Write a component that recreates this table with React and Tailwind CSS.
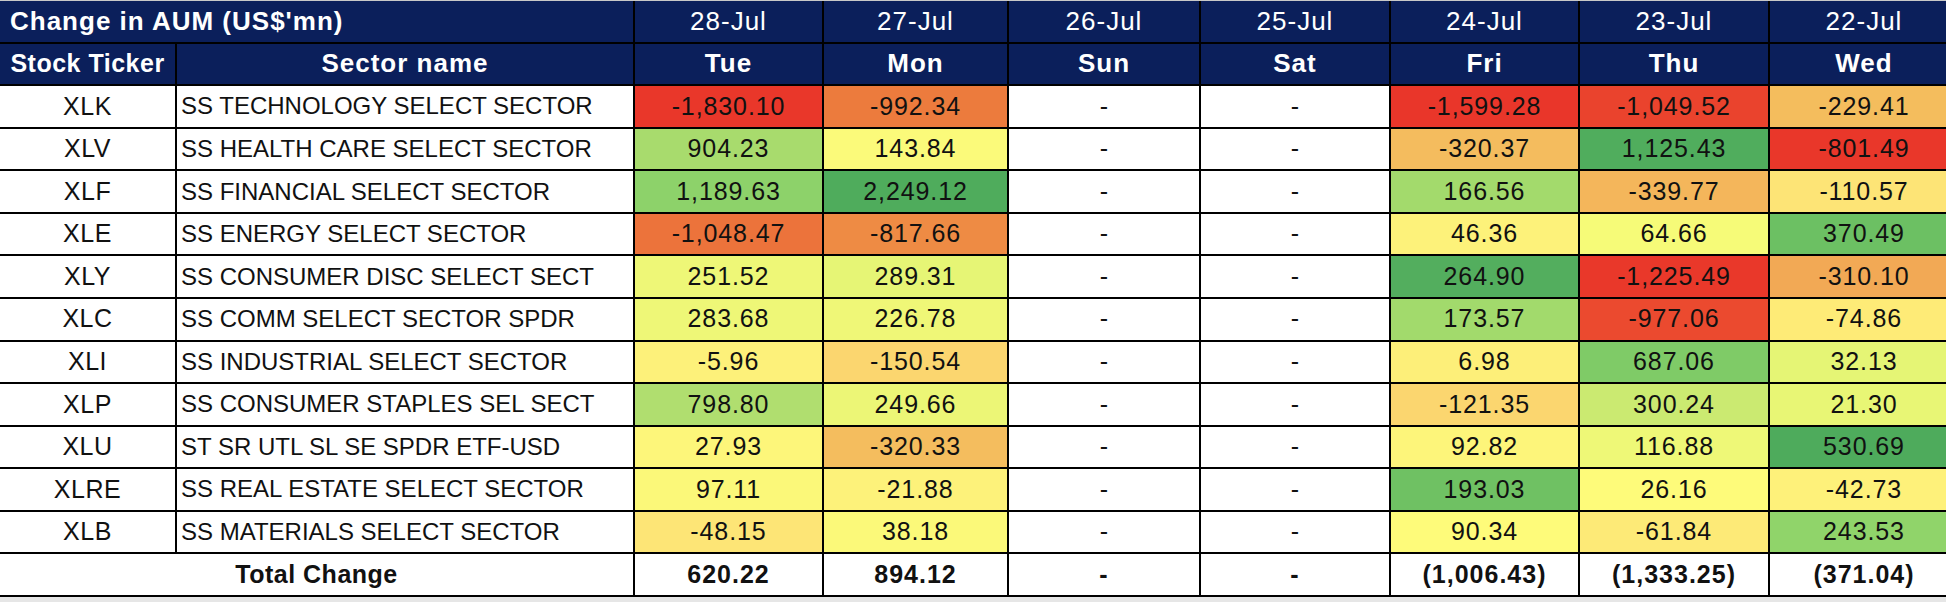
const days = [
  { date: "28-Jul", day: "Tue" },
  { date: "27-Jul", day: "Mon" },
  { date: "26-Jul", day: "Sun" },
  { date: "25-Jul", day: "Sat" },
  { date: "24-Jul", day: "Fri" },
  { date: "23-Jul", day: "Thu" },
  { date: "22-Jul", day: "Wed" },
];

// [value, background] per day; null = weekend dash
const rows = [
  ["XLK", "SS TECHNOLOGY SELECT SECTOR", [["-1,830.10", "#e9372a"], ["-992.34", "#ec7b3d"], null, null, ["-1,599.28", "#e9362a"], ["-1,049.52", "#ea432d"], ["-229.41", "#f4bd5d"]]],
  ["XLV", "SS HEALTH CARE SELECT SECTOR", [["904.23", "#a8db6d"], ["143.84", "#fbfa7a"], null, null, ["-320.37", "#f4bc5e"], ["1,125.43", "#50ad5d"], ["-801.49", "#e9372a"]]],
  ["XLF", "SS FINANCIAL SELECT SECTOR", [["1,189.63", "#8dd26a"], ["2,249.12", "#4fac5c"], null, null, ["166.56", "#a3da6c"], ["-339.77", "#f4b65b"], ["-110.57", "#fde476"]]],
  ["XLE", "SS ENERGY SELECT SECTOR", [["-1,048.47", "#ec733b"], ["-817.66", "#ee8b44"], null, null, ["46.36", "#fdf27a"], ["64.66", "#f6fb78"], ["370.49", "#6cc063"]]],
  ["XLY", "SS CONSUMER DISC SELECT SECT", [["251.52", "#eef777"], ["289.31", "#e6f575"], null, null, ["264.90", "#53ae5e"], ["-1,225.49", "#e9382a"], ["-310.10", "#f2a955"]]],
  ["XLC", "SS COMM SELECT SECTOR SPDR", [["283.68", "#eef777"], ["226.78", "#eff777"], null, null, ["173.57", "#a2da6c"], ["-977.06", "#eb4a2f"], ["-74.86", "#feeb77"]]],
  ["XLI", "SS INDUSTRIAL SELECT SECTOR", [["-5.96", "#fdf17a"], ["-150.54", "#fbd66f"], null, null, ["6.98", "#fdef79"], ["687.06", "#7fcb67"], ["32.13", "#e5f575"]]],
  ["XLP", "SS CONSUMER STAPLES SEL SECT", [["798.80", "#b0de6f"], ["249.66", "#ecf676"], null, null, ["-121.35", "#fbd66f"], ["300.24", "#cbea71"], ["21.30", "#e8f675"]]],
  ["XLU", "ST SR UTL SL SE SPDR ETF-USD", [["27.93", "#fdf67a"], ["-320.33", "#f4bd5e"], null, null, ["92.82", "#fdf57a"], ["116.88", "#eef877"], ["530.69", "#4eab5c"]]],
  ["XLRE", "SS REAL ESTATE SELECT SECTOR", [["97.11", "#fbf879"], ["-21.88", "#fdf27a"], null, null, ["193.03", "#6fc163"], ["26.16", "#fefb7a"], ["-42.73", "#fef17a"]]],
  ["XLB", "SS MATERIALS SELECT SECTOR", [["-48.15", "#fde576"], ["38.18", "#fbf979"], null, null, ["90.34", "#fefb7a"], ["-61.84", "#fdea77"], ["243.53", "#90d46a"]]],
];

const totals = ["620.22", "894.12", "-", "-", "(1,006.43)", "(1,333.25)", "(371.04)"];

const font = { fontFamily: '"Liberation Sans", Arial, sans-serif' };

export default function App() {
  return (
    <div className="w-[1946px] h-[602px] bg-[#e6e6e6]" style={font}>
      <div className="border-t border-[#c8c8c8] pb-[2px] bg-black grid grid-cols-[175px_456px_187px_183px_190px_188px_187px_188px_188px] auto-rows-[40.57px] gap-[2px]">
        {/* header row 1 */}
        <div className="col-span-2 bg-[#0b1f5b] text-white font-bold text-[26px] tracking-[1px] flex items-center pl-[10px]">
          Change in AUM (US$'mn)
        </div>
        {days.map((d) => (
          <div key={d.date} className="bg-[#0b1f5b] text-white text-[26px] tracking-[1px] flex items-center justify-center">
            {d.date}
          </div>
        ))}

        {/* header row 2 */}
        <div className="bg-[#0b1f5b] text-white font-bold text-[25px] tracking-[0.5px] flex items-center justify-center">
          Stock Ticker
        </div>
        <div className="bg-[#0b1f5b] text-white font-bold text-[26px] tracking-[1px] flex items-center justify-center">
          Sector name
        </div>
        {days.map((d) => (
          <div key={d.day} className="bg-[#0b1f5b] text-white font-bold text-[26px] tracking-[1px] flex items-center justify-center">
            {d.day}
          </div>
        ))}

        {/* data rows */}
        {rows.map(([ticker, name, vals]) => (
          <Row key={ticker} ticker={ticker} name={name} vals={vals} />
        ))}

        {/* totals */}
        <div className="col-span-2 bg-white text-[#111] font-bold text-[25px] tracking-[0.5px] flex items-center justify-center">
          Total Change
        </div>
        {totals.map((t, i) => (
          <div key={i} className="bg-white text-[#111] font-bold text-[25px] tracking-[1px] flex items-center justify-center">
            {t}
          </div>
        ))}
      </div>
    </div>
  );
}

function Row({ ticker, name, vals }) {
  return (
    <>
      <div className="bg-white text-[#111] text-[25px] tracking-[0.5px] flex items-center justify-center">
        {ticker}
      </div>
      <div className="bg-white text-[#111] text-[24px] flex items-center pl-[4px] whitespace-nowrap overflow-hidden">
        {name}
      </div>
      {vals.map((v, i) =>
        v ? (
          <div
            key={i}
            className="text-[#111] text-[25px] tracking-[0.9px] flex items-center justify-center"
            style={{ backgroundColor: v[1] }}
          >
            {v[0]}
          </div>
        ) : (
          <div key={i} className="bg-white text-[#111] text-[25px] flex items-center justify-center">
            -
          </div>
        )
      )}
    </>
  );
}
